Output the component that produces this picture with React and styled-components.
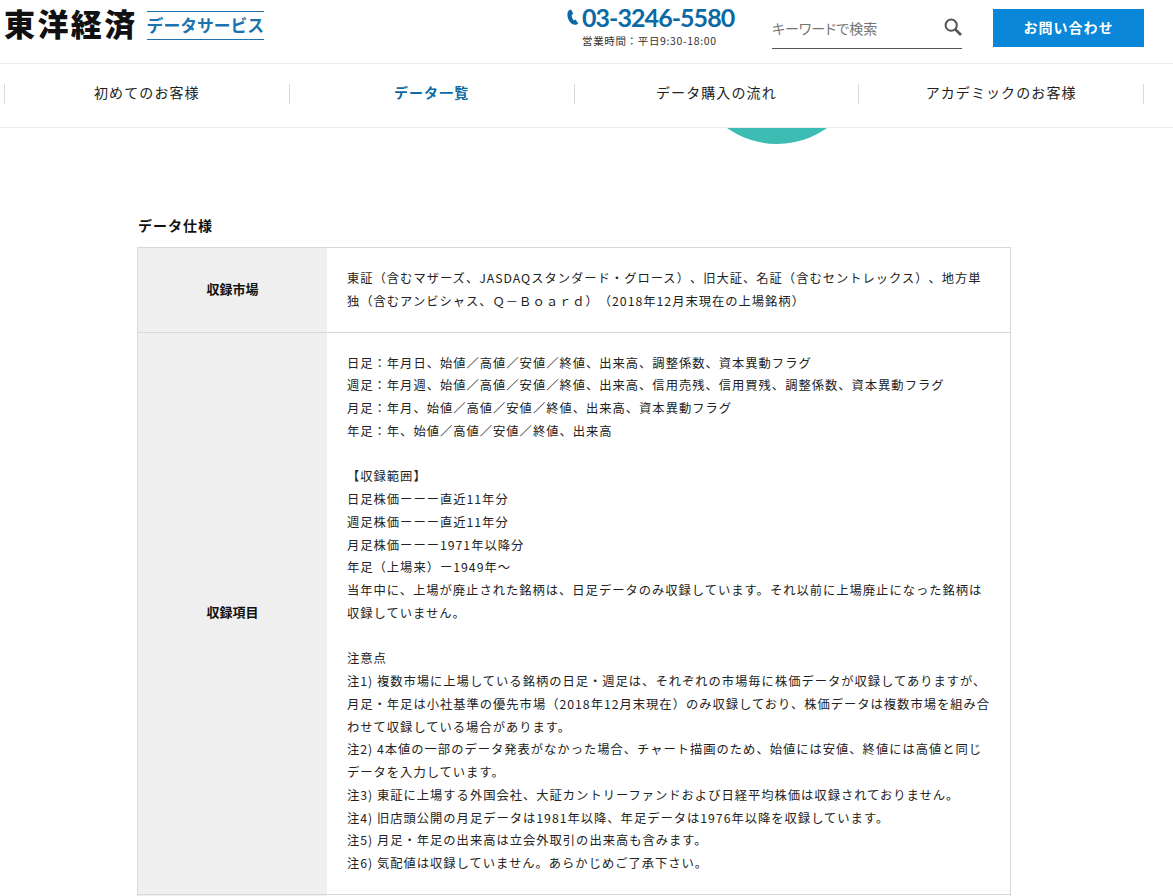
import styled, { createGlobalStyle } from "styled-components";

const GlobalStyle = createGlobalStyle`
  html, body {
    margin: 0;
    padding: 0;
    background: #fff;
    color: #111;
    font-family: "Noto Sans CJK JP", "Liberation Sans", sans-serif;
    text-spacing-trim: space-all;
  }
  html {
    overflow: hidden;
  }
  * {
    box-sizing: border-box;
  }
`;

const Page = styled.div`
  width: 1173px;
  height: 896px;
  overflow: hidden;
`;
const TopBar = styled.header`
  height: 64px;
  display: flex;
  border-bottom: 1px solid #ececec;
  padding: 9px 29px 0 4px;
`;
const Logo = styled.div`
  display: flex;
  height: 32px;
  margin-right: auto;
`;
const LogoMain = styled.span`
  font-size: 31px;
  font-weight: 900;
  line-height: 28px;
  letter-spacing: 2.4px;
  color: #111;
  margin-right: 9px;
`;
const LogoSub = styled.span`
  height: 29px;
  margin-top: 2px;
  border-top: 1px solid #1b72ac;
  border-bottom: 1px solid #1b72ac;
  color: #1b72ac;
  font-size: 16.8px;
  font-weight: 700;
  line-height: 26px;
  white-space: nowrap;
`;
const Contact = styled.div`
  width: 168px;
  margin-right: 37px;
`;
const Phone = styled.div`
  display: flex;
  align-items: center;
  height: 18px;
  padding-bottom: 2px;
  color: #0b6aa5;
  font-family: Lato, sans-serif;
  font-size: 25px;
  font-weight: 700;
  line-height: 16px;
  letter-spacing: -0.95px;
  white-space: nowrap;
  svg {
    margin-right: 3px;
    flex: none;
  }
`;
const Hours = styled.div`
  margin: 7px 0 0 15px;
  font-size: 10.5px;
  line-height: 14px;
  color: #333;
  letter-spacing: 0.65px;
  white-space: nowrap;
`;
const Search = styled.div`
  width: 190px;
  height: 40px;
  display: flex;
  align-items: center;
  justify-content: space-between;
  border-bottom: 1px solid #555;
  margin-right: 31px;
  span {
    font-size: 14px;
    font-feature-settings: "palt";
    line-height: 18px;
    margin-bottom: 2px;
    color: #757575;
  }
  svg {
    margin-bottom: 4px;
  }
`;
const ContactButton = styled.a`
  width: 151px;
  height: 38px;
  display: flex;
  align-items: center;
  justify-content: center;
  padding-bottom: 3px;
  background: #0a87d8;
  color: #fff;
  font-size: 14px;
  font-weight: 700;
  letter-spacing: 1px;
`;
const Nav = styled.nav`
  height: 64px;
  display: flex;
  align-items: center;
  padding: 0 0 3px 4px;
  border-bottom: 1px solid #ececec;
`;
const NavItem = styled.a`
  width: 284.75px;
  height: 20px;
  display: flex;
  align-items: center;
  justify-content: center;
  padding-bottom: 4px;
  border-left: 1px solid #d9d9d9;
  font-size: 14px;
  line-height: 18px;
  letter-spacing: 1.1px;
  color: ${(props) => (props.$active ? "#0b6aa5" : "#222")};
  font-weight: ${(props) => (props.$active ? 700 : 400)};
  &:last-child {
    width: 285.75px;
    border-right: 1px solid #d9d9d9;
  }
`;
const HeroClip = styled.div`
  width: 172px;
  height: 16px;
  margin-left: 691px;
  overflow: hidden;
`;
const HeroCircle = styled.div`
  width: 172px;
  height: 172px;
  margin-top: -156px;
  border-radius: 50%;
  background: #3cbcb2;
`;
const Section = styled.section`
  padding: 71px 162px 0 137px;
`;
const Title = styled.h2`
  margin: 0 0 11px 1px;
  font-size: 14px;
  font-weight: 700;
  line-height: 21px;
  letter-spacing: 1px;
`;
const Table = styled.div`
  border: solid #d9d9d9;
  border-width: 1px 1px 0;
`;
const Row = styled.div`
  display: flex;
  border-bottom: 1px solid #d9d9d9;
`;
const Head = styled.div`
  width: 189px;
  flex: none;
  display: flex;
  align-items: center;
  justify-content: center;
  padding-bottom: 3px;
  background: #efefef;
  font-size: 13px;
  font-weight: 700;
`;
const Cell = styled.div`
  flex: 1;
  padding: 19px 20px;
  font-size: 12.3px;
  line-height: 22.75px;
  letter-spacing: 0.98px;
  color: #222;
`;
const Line = styled.div`
  min-height: 22.75px;
  white-space: nowrap;
`;

const market = [
  "東証（含むマザーズ、JASDAQスタンダード・グロース）、旧大証、名証（含むセントレックス）、地方単",
  "独（含むアンビシャス、Ｑ－Ｂｏａｒｄ）（2018年12月末現在の上場銘柄）",
];

const items = [
  "日足：年月日、始値／高値／安値／終値、出来高、調整係数、資本異動フラグ",
  "週足：年月週、始値／高値／安値／終値、出来高、信用売残、信用買残、調整係数、資本異動フラグ",
  "月足：年月、始値／高値／安値／終値、出来高、資本異動フラグ",
  "年足：年、始値／高値／安値／終値、出来高",
  "",
  "【収録範囲】",
  "日足株価ーーー直近11年分",
  "週足株価ーーー直近11年分",
  "月足株価ーーー1971年以降分",
  "年足（上場来）ー1949年～",
  "当年中に、上場が廃止された銘柄は、日足データのみ収録しています。それ以前に上場廃止になった銘柄は",
  "収録していません。",
  "",
  "注意点",
  "注1) 複数市場に上場している銘柄の日足・週足は、それぞれの市場毎に株価データが収録してありますが、",
  "月足・年足は小社基準の優先市場（2018年12月末現在）のみ収録しており、株価データは複数市場を組み合",
  "わせて収録している場合があります。",
  "注2) 4本値の一部のデータ発表がなかった場合、チャート描画のため、始値には安値、終値には高値と同じ",
  "データを入力しています。",
  "注3) 東証に上場する外国会社、大証カントリーファンドおよび日経平均株価は収録されておりません。",
  "注4) 旧店頭公開の月足データは1981年以降、年足データは1976年以降を収録しています。",
  "注5) 月足・年足の出来高は立会外取引の出来高も含みます。",
  "注6) 気配値は収録していません。あらかじめご了承下さい。",
];

const navLinks = ["初めてのお客様", "データ一覧", "データ購入の流れ", "アカデミックのお客様"];

export default function App() {
  return (
    <Page>
      <GlobalStyle />
      <TopBar>
        <Logo>
          <LogoMain>東洋経済</LogoMain>
          <LogoSub>データサービス</LogoSub>
        </Logo>
        <Contact>
          <Phone>
            <svg width="12" height="16" viewBox="0 0 12 16">
              <path
                d="M4 0.6 C2.4 0.8 1 2 0.5 4 C0 6.6 0.8 9.8 2.4 12.2 C3.8 14.3 5.8 15.8 8 15.8 C9.2 15.8 10.4 15.2 11.2 14.2 L8.4 10.6 C7.8 11.2 7.2 11.4 6.6 11.2 C5.4 10 4.6 7.6 4.8 5.8 C5.2 5.4 5.8 5.2 6.4 5 Z"
                fill="#0b6aa5"
              />
            </svg>
            03-3246-5580
          </Phone>
          <Hours>営業時間：平日9:30-18:00</Hours>
        </Contact>
        <Search>
          <span>キーワードで検索</span>
          <svg width="18" height="18" viewBox="0 0 18 18" fill="none" stroke="#555">
            <circle cx="7.2" cy="7.2" r="5.6" strokeWidth="2" />
            <path d="M11.5 11.5 L17 17" strokeWidth="2.6" />
          </svg>
        </Search>
        <ContactButton>お問い合わせ</ContactButton>
      </TopBar>
      <Nav>
        {navLinks.map((label, i) => (
          <NavItem key={label} $active={i === 1}>
            {label}
          </NavItem>
        ))}
      </Nav>
      <HeroClip>
        <HeroCircle />
      </HeroClip>
      <Section>
        <Title>データ仕様</Title>
        <Table>
          <Row>
            <Head>収録市場</Head>
            <Cell>
              {market.map((text, i) => (
                <Line key={i}>{text}</Line>
              ))}
            </Cell>
          </Row>
          <Row>
            <Head>収録項目</Head>
            <Cell>
              {items.map((text, i) => (
                <Line key={i}>{text}</Line>
              ))}
            </Cell>
          </Row>
          <Row>
            <Head />
            <Cell />
          </Row>
        </Table>
      </Section>
    </Page>
  );
}
